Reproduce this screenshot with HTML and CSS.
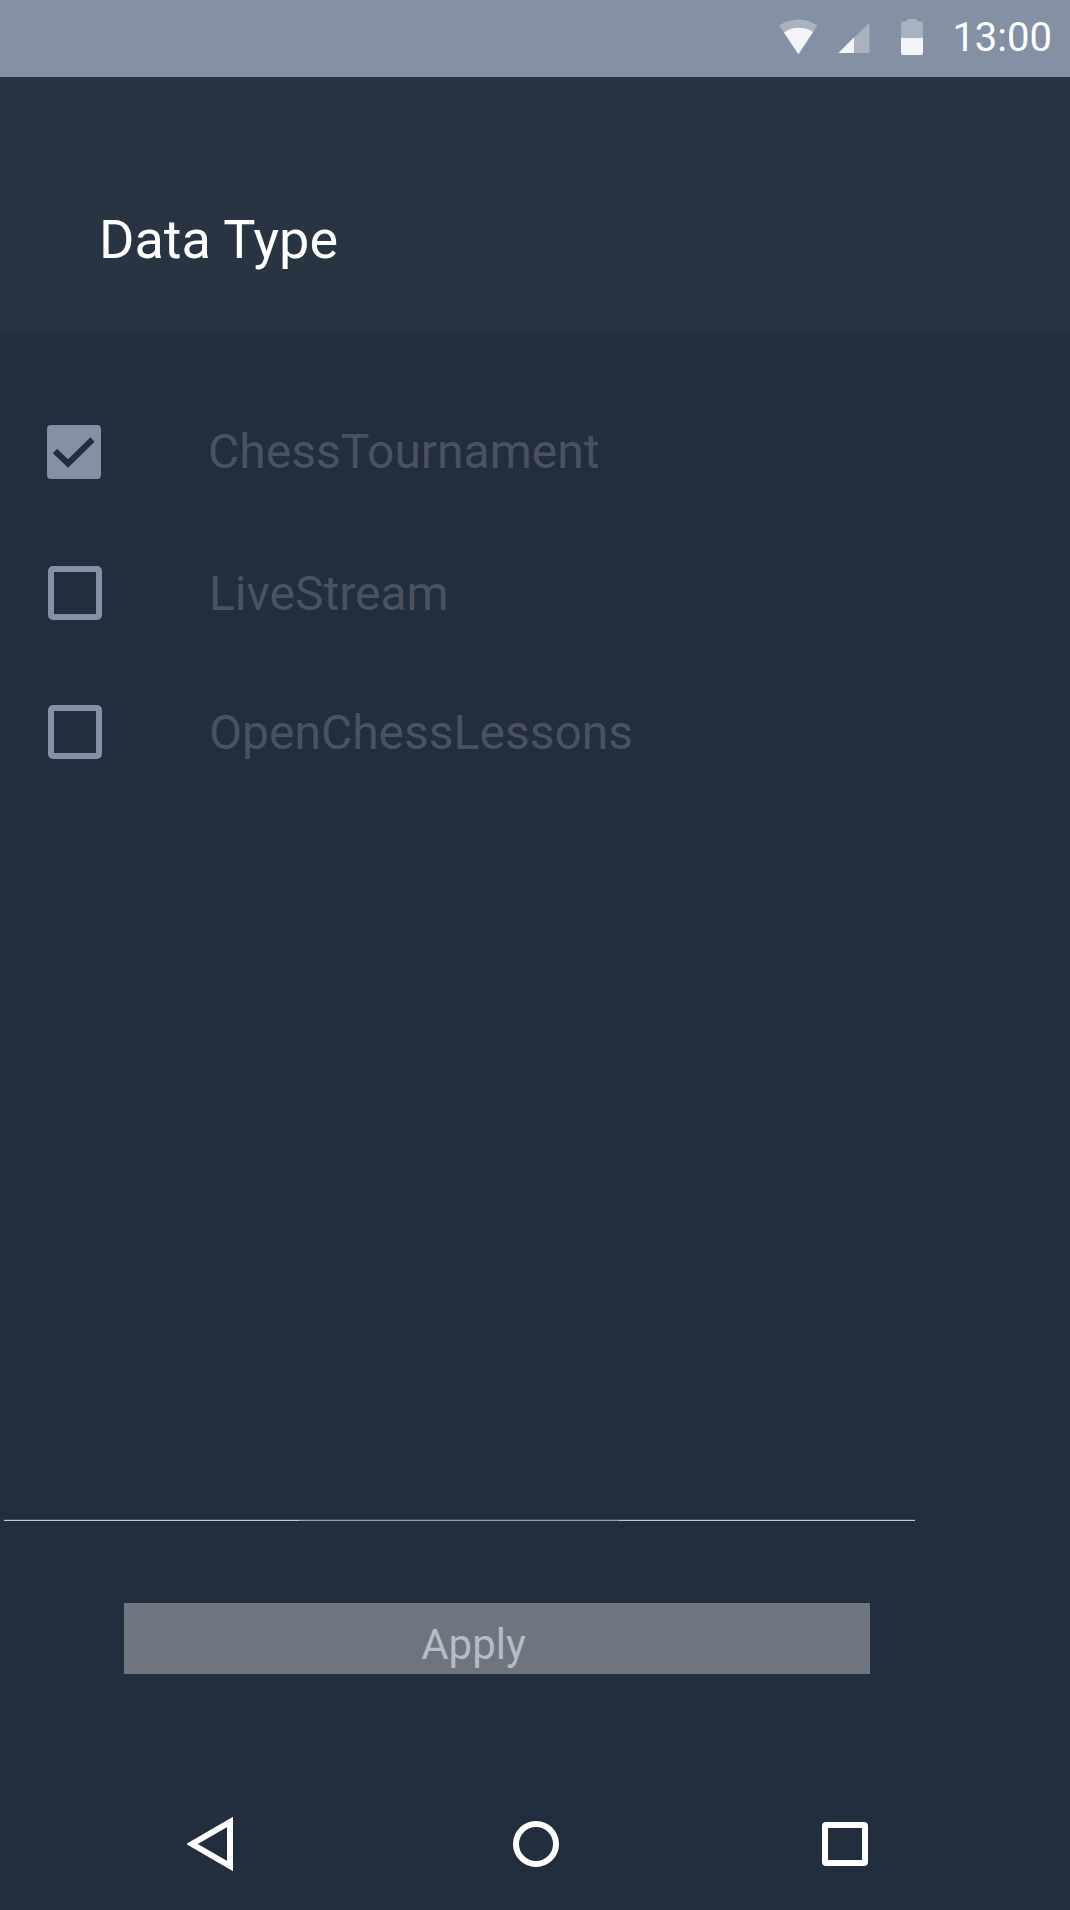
FILE: index.html
```html
<!DOCTYPE html>
<html lang="en">
<head>
<meta charset="utf-8">
<title>Data Type</title>
<link rel="stylesheet" href="styles.css">
</head>
<body>
<div class="screen">
  <div class="status-bar">
    <svg class="wifi" width="40" height="36" viewBox="0 0 40 36">
      <path class="dim" d="M0 6.500Q9 .4 19.400 .4T38.400 6.500L19.400 35.300Z"/>
      <path class="lit" d="M5 13.500Q11 8.800 19.400 8.800T34 13L19.400 35.300Z"/>
    </svg>
    <svg class="signal" width="32" height="32" viewBox="0 0 32 32">
      <path class="dim" d="M.5 31L31.500 .5V31Z"/>
      <path class="lit" d="M.5 31L16 15.500V31Z"/>
    </svg>
    <svg class="battery" width="22" height="36" viewBox="0 0 22 36">
      <path class="dim" d="M0 20V4.500Q0 2.500 2 2.500H5L7 0H15L17 2.500H20Q22 2.500 22 4.500V20Z"/>
      <path class="lit" d="M0 19H22V34Q22 36 20 36H2Q0 36 0 34Z"/>
    </svg>
    <span class="clock">13:00</span>
  </div>
  <header class="header"><h1 class="title">Data Type</h1></header>
  <main class="options">
    <label class="option option-first">
      <svg class="box" width="54" height="54" viewBox="0 0 54 54">
        <rect class="box-fill" width="54" height="54" rx="4"/>
        <path class="tick" d="M8 26L21 38.500L45.500 14.500"/>
      </svg>
      <span class="label">ChessTournament</span>
    </label>
    <label class="option option-second">
      <svg class="box" width="54" height="54" viewBox="0 0 54 54"><rect class="box-line" x="3" y="3" width="48" height="48" rx="2"/></svg>
      <span class="label label-low">LiveStream</span>
    </label>
    <label class="option">
      <svg class="box" width="54" height="54" viewBox="0 0 54 54"><rect class="box-line" x="3" y="3" width="48" height="48" rx="2"/></svg>
      <span class="label label-low">OpenChessLessons</span>
    </label>
  </main>
  <div class="divider"><span class="seg seg-start"></span><span class="seg seg-mid"></span><span class="seg seg-end"></span></div>
  <button class="apply">Apply</button>
  <nav class="nav">
    <svg class="nav-back" width="48" height="54" viewBox="0 0 48 54"><path class="nav-line" d="M43 5V49L5 27Z"/></svg>
    <svg class="nav-home" width="46" height="46" viewBox="0 0 46 46"><circle class="nav-line" cx="23" cy="23" r="20"/></svg>
    <svg width="46" height="44" viewBox="0 0 46 44"><rect class="nav-line" x="3" y="3" width="40" height="38" rx="1"/></svg>
  </nav>
</div>
</body>
</html>
```
FILE: styles.css
```css
body {
  margin: 0;
  font-family: Roboto, sans-serif;
  background: #222d3d;
}

.screen {
  display: flex;
  flex-direction: column;
  width: 1070px;
  height: 1910px;
  overflow: hidden;
  background: #222d3d;
}

.status-bar {
  display: flex;
  flex: none;
  justify-content: flex-end;
  align-items: flex-start;
  box-sizing: border-box;
  height: 77px;
  padding: 19px 18px 0 0;
  background: #8490a4;
}

.dim { fill: #a9b2bf; }
.lit { fill: #f3f4f6; }
.wifi { margin-right: 19px; }
.signal { margin: 3px 31px 0 0; }
.battery { margin-right: 29px; }

.clock {
  font-size: 40px;
  line-height: 38px;
  color: #fff;
}

.header {
  flex: none;
  box-sizing: border-box;
  height: 254px;
  padding: 133px 0 0 99px;
  background: #293442;
}

.title {
  margin: 0;
  font-size: 54px;
  font-weight: 400;
  line-height: 60px;
  color: #fff;
}

.options {
  display: flex;
  flex: none;
  flex-direction: column;
  box-sizing: border-box;
  height: 1188px;
  padding: 94px 0 0 48px;
}

.option {
  display: flex;
  height: 54px;
  gap: 107px;
}

.option-first { margin: 0 0 87px -1px; }
.option-second { margin-bottom: 85px; }
.box { flex: none; }
.box-fill { fill: #8490a4; }
.box-line { fill: none; stroke: #8490a4; stroke-width: 6; }
.tick { fill: none; stroke: #222d3d; stroke-width: 6; }

.label {
  font-size: 48px;
  line-height: 54px;
  color: #4a525d;
}

.label-low { padding-top: 1px; }

.divider {
  display: flex;
  flex: none;
  width: 911px;
  height: 2px;
  margin-left: 4px;
}

.seg { box-sizing: border-box; border-top: 1px solid #414c5f; }
.seg-start { width: 295px; background: #bfcad5; }
.seg-mid { width: 320px; background: #95a1b3; }
.seg-end { width: 296px; background: #bfcad5; }

.apply {
  flex: none;
  box-sizing: border-box;
  width: 746px;
  height: 71px;
  margin: 82px 0 0 124px;
  padding: 12px 47px 0 0;
  border: 0;
  background: #6e757f;
  font-family: inherit;
  font-size: 42px;
  line-height: 59px;
  color: #b5bcc7;
}

.nav {
  display: flex;
  align-items: center;
  flex: none;
  margin: 143px 0 0 187px;
}

.nav-back { margin-right: 278px; }
.nav-home { margin-right: 263px; }
.nav-line { fill: none; stroke: #fff; stroke-width: 6; }
```
